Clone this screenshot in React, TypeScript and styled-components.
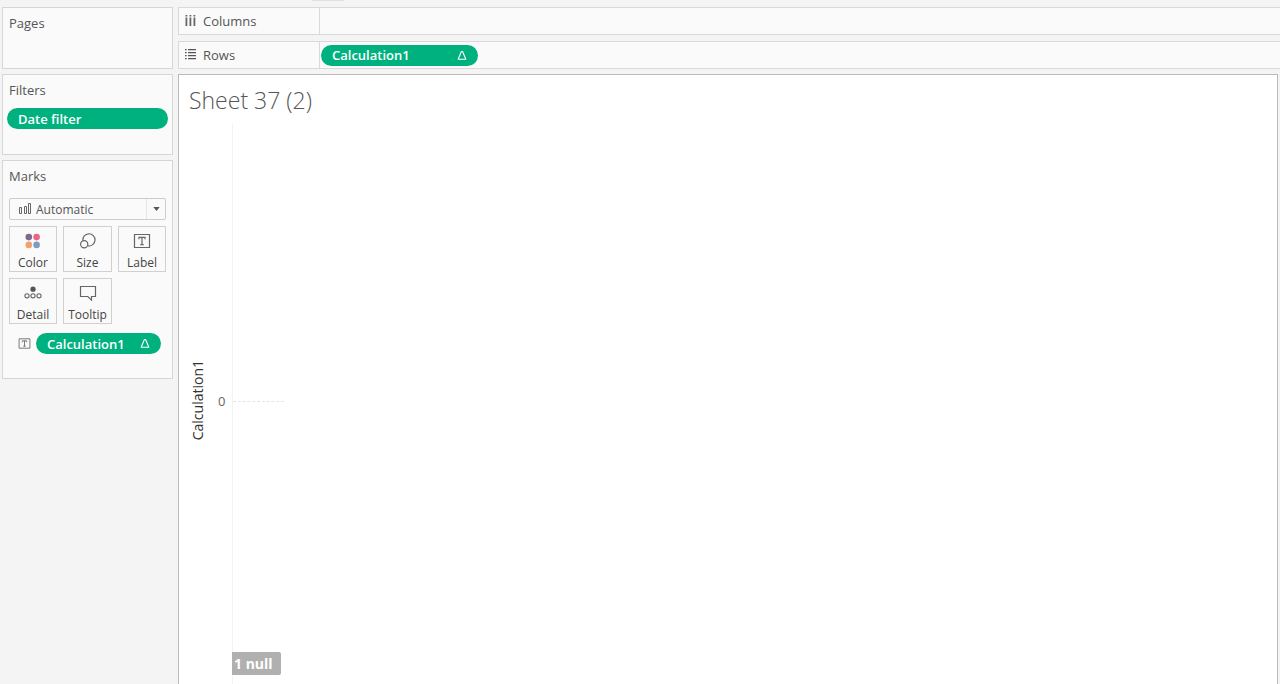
import React from "react";
import styled, { createGlobalStyle } from "styled-components";

const GlobalStyle = createGlobalStyle`
  *, *::before, *::after { box-sizing: border-box; }
  body {
    margin: 0;
    background: #f4f4f4;
    color: #555;
    font-family: "Open Sans", "Noto Sans", sans-serif;
    font-size: 13px;
  }
  button, select { font: inherit; color: inherit; margin: 0; }
`;

const Page = styled.div`
  display: flex;
  flex-direction: column;
  min-height: 100vh;
`;

const ToolbarEdge = styled.header`
  height: 7px;
  padding-left: 312px;
  &::before {
    content: "";
    display: block;
    width: 32px;
    height: 1px;
    background: #e0e0e0;
  }
`;

const Workspace = styled.div`
  flex: 1;
  display: flex;
  gap: 5px;
  padding-left: 2px;
`;

const Sidebar = styled.aside`
  flex: 0 0 171px;
  min-width: 0;
  display: flex;
  flex-direction: column;
  gap: 5px;
`;

const Card = styled.section<{ $minHeight: number }>`
  min-height: ${(p) => p.$minHeight}px;
  padding: 5px 6px 24px;
  background: #fafafa;
  border: 1px solid #d6d6d6;
`;

const CardTitle = styled.h2`
  margin: 0;
  font-size: 13px;
  font-weight: 400;
  line-height: 20px;
`;

const Pill = styled.button`
  display: flex;
  align-items: center;
  justify-content: space-between;
  height: 21px;
  padding: 0 11px;
  border: 0;
  border-radius: 11px;
  background: #00b180;
  color: #fff;
  font-weight: 600;
  text-align: left;
`;

const FilterPill = styled(Pill)`
  width: 161px;
  margin: 8px -2px 0;
`;

const RowPill = styled(Pill)`
  width: 157px;
`;

const MarkPill = styled(Pill)`
  width: 125px;
`;

const MarkType = styled.label`
  display: grid;
  grid-template-columns: 20px 1fr 19px;
  align-items: center;
  height: 22px;
  margin-top: 12px;
  padding-left: 6px;
  background: #fafafa;
  border: 1px solid #ccc;
  border-radius: 2px;
  font-size: 12px;
`;

const MarkSelect = styled.select`
  grid-column: 2 / 4;
  grid-row: 1;
  height: 20px;
  padding: 0;
  border: 0;
  background: transparent;
  appearance: none;
`;

const MarkIcon = styled.span`
  grid-column: 1;
  grid-row: 1;
  display: flex;
  padding-left: 3px;
`;

const Arrow = styled.span`
  grid-column: 3;
  grid-row: 1;
  display: flex;
  align-items: center;
  justify-content: center;
  height: 20px;
  border-left: 1px solid #e4e4e4;
  pointer-events: none;
`;

const MarkGrid = styled.div`
  display: grid;
  grid-template-columns: 48px 49px 48px;
  gap: 6px;
  margin-top: 6px;
`;

const MarkButton = styled.button`
  display: flex;
  flex-direction: column;
  align-items: center;
  height: 46px;
  padding: 5px 0 0;
  background: #fafafa;
  border: 1px solid #d0d0d0;
  font-size: 12px;
  line-height: 16px;
  color: #444;
  svg { margin-bottom: 5px; }
`;

const Encoding = styled.div`
  display: flex;
  align-items: center;
  gap: 5px;
  margin-top: 9px;
  padding-left: 9px;
`;

const Main = styled.main`
  flex: 1;
  min-width: 0;
  display: flex;
  flex-direction: column;
`;

const Shelf = styled.div`
  display: flex;
  height: 28px;
  margin-bottom: 6px;
  background: #fafafa;
  border: 1px solid #d9d9d9;
  border-right: 0;
  & + & { margin-bottom: 5px; }
`;

const ShelfLabel = styled.div`
  flex: 0 0 141px;
  display: flex;
  align-items: center;
  gap: 6px;
  padding-left: 6px;
  border-right: 1px solid #d9d9d9;
`;

const ShelfBody = styled.div`
  flex: 1;
  display: flex;
  align-items: center;
  padding-left: 1px;
`;

const View = styled.section`
  flex: 1;
  display: flex;
  flex-direction: column;
  margin-right: 2px;
  background: #fff;
  border: 1px solid #bbb;
  border-bottom: 0;
`;

const SheetTitle = styled.h1`
  margin: 0;
  padding: 9px 10px 8px;
  font-size: 23px;
  font-weight: 300;
  line-height: 32px;
  color: #555;
`;

const Chart = styled.div`
  flex: 1;
  display: flex;
`;

const AxisTitle = styled.div`
  display: flex;
  align-items: center;
  justify-content: center;
  width: 37px;
  padding-bottom: 7px;
  span {
    writing-mode: vertical-rl;
    transform: rotate(180deg);
    font-size: 14px;
    line-height: 18px;
    color: #333;
  }
`;

const AxisTick = styled.div`
  display: flex;
  align-items: center;
  width: 16px;
  padding: 0 0 7px 2px;
  color: #666;
`;

const Pane = styled.div`
  position: relative;
  flex: 1;
  display: flex;
  align-items: center;
  padding-bottom: 6px;
  border-left: 1px solid #f3f3f3;
`;

const ZeroLine = styled.div`
  width: 51px;
  border-top: 1px dashed #e4e4e4;
`;

const NullBadge = styled.button`
  position: absolute;
  left: -1px;
  bottom: 9px;
  height: 23px;
  width: 49px;
  padding: 0 0 0 2px;
  border: 0;
  border-radius: 0 2px 2px 0;
  background: #b0b0b0;
  color: #fff;
  font-size: 14px;
  font-weight: 700;
  text-align: left;
`;

const Delta = () => (
  <svg width="10" height="11" viewBox="0 0 10 11" fill="none" stroke="#fff" strokeLinejoin="round" aria-hidden="true">
    <path d="M4.4 1.5h1.2L8.8 9.3H1.2z" strokeWidth="1.1" />
  </svg>
);

const ColumnsIcon = () => (
  <svg width="12" height="12" viewBox="0 0 12 12" fill="#666" aria-hidden="true">
    {[0.5, 4.5, 8.5].map((x) => (
      <path key={x} d={`M${x} 0h1.8v1.6h-1.8zM${x} 2.6h1.8v8.4h-1.8z`} />
    ))}
  </svg>
);

const RowsIcon = () => (
  <svg width="12" height="12" viewBox="0 0 12 12" fill="#555" aria-hidden="true">
    {[1, 4, 7, 10].map((y) => (
      <path key={y} d={`M0 ${y - 1}h1.6v1.3h-1.6zM3 ${y - 1}h8v1.3h-8z`} />
    ))}
  </svg>
);

const BarsIcon = () => (
  <svg width="13" height="12" viewBox="0 0 13 12" fill="none" stroke="#666" aria-hidden="true">
    <path d="M.5 4.5h2v6h-2zM5.5 3.5h2v7h-2zM9.5 .5h2v10h-2z" />
  </svg>
);

const ColorIcon = () => (
  <svg width="18" height="18" viewBox="0 0 18 18" aria-hidden="true">
    <circle cx="4.8" cy="5.1" r="3.3" fill="#7a6a8e" />
    <circle cx="12.6" cy="5.1" r="3.3" fill="#ee6480" />
    <circle cx="4.8" cy="12.9" r="3.3" fill="#f3a06c" />
    <circle cx="12.6" cy="12.9" r="3.3" fill="#7c9dbd" />
  </svg>
);

const SizeIcon = () => (
  <svg width="18" height="18" viewBox="0 0 18 18" fill="none" stroke="#666" strokeWidth="1.2" aria-hidden="true">
    <path d="M3.9 8.7A6.1 6.1 0 1 1 9 13.9" />
    <circle cx="5.2" cy="12.3" r="3.6" />
  </svg>
);

const TextIcon = ({ size }: { size: number }) => (
  <svg width={size} height={size} viewBox="0 0 18 18" fill="none" stroke="#666" strokeWidth="1.2" aria-hidden="true">
    <path d="M1.5 2.5h15v13h-15z" />
    <path d="M6 7.3V5.3h6v2M9 5.3v7.4M7.3 12.7h3.4" />
  </svg>
);

const DetailIcon = () => (
  <svg width="18" height="18" viewBox="0 0 18 18" fill="none" stroke="#666" strokeWidth="1.1" aria-hidden="true">
    <circle cx="9" cy="5.2" r="2.6" fill="#555" stroke="none" />
    <circle cx="3" cy="11.8" r="2.1" />
    <circle cx="9" cy="11.8" r="2.1" />
    <circle cx="15" cy="11.8" r="2.1" />
  </svg>
);

const TooltipIcon = () => (
  <svg width="18" height="18" viewBox="0 0 18 18" fill="none" stroke="#666" strokeWidth="1.2" aria-hidden="true">
    <path d="M1.5 2.5h15v10h-4v3.6L8.8 12.5H1.5z" />
  </svg>
);

const marks = [
  { name: "Color", icon: <ColorIcon /> },
  { name: "Size", icon: <SizeIcon /> },
  { name: "Label", icon: <TextIcon size={18} /> },
  { name: "Detail", icon: <DetailIcon /> },
  { name: "Tooltip", icon: <TooltipIcon /> },
];

export default function App() {
  return (
    <Page>
      <GlobalStyle />
      <ToolbarEdge />
      <Workspace>
        <Sidebar>
          <Card $minHeight={62}>
            <CardTitle>Pages</CardTitle>
          </Card>
          <Card $minHeight={81}>
            <CardTitle>Filters</CardTitle>
            <FilterPill type="button">Date filter</FilterPill>
          </Card>
          <Card $minHeight={218}>
            <CardTitle>Marks</CardTitle>
            <MarkType>
              <MarkIcon>
                <BarsIcon />
              </MarkIcon>
              <MarkSelect aria-label="Mark type" defaultValue="Automatic">
                <option>Automatic</option>
              </MarkSelect>
              <Arrow>
                <svg width="7" height="4" viewBox="0 0 7 4" fill="#555" aria-hidden="true">
                  <path d="M.3 0h6.4L3.5 4z" />
                </svg>
              </Arrow>
            </MarkType>
            <MarkGrid>
              {marks.map((m) => (
                <MarkButton key={m.name} type="button">
                  {m.icon}
                  {m.name}
                </MarkButton>
              ))}
            </MarkGrid>
            <Encoding>
              <TextIcon size={13} />
              <MarkPill type="button">
                Calculation1
                <Delta />
              </MarkPill>
            </Encoding>
          </Card>
        </Sidebar>
        <Main>
          <Shelf>
            <ShelfLabel>
              <ColumnsIcon />
              Columns
            </ShelfLabel>
            <ShelfBody />
          </Shelf>
          <Shelf>
            <ShelfLabel>
              <RowsIcon />
              Rows
            </ShelfLabel>
            <ShelfBody>
              <RowPill type="button">
                Calculation1
                <Delta />
              </RowPill>
            </ShelfBody>
          </Shelf>
          <View>
            <SheetTitle>Sheet 37 (2)</SheetTitle>
            <Chart>
              <AxisTitle>
                <span>Calculation1</span>
              </AxisTitle>
              <AxisTick>0</AxisTick>
              <Pane>
                <ZeroLine />
                <NullBadge type="button">1 null</NullBadge>
              </Pane>
            </Chart>
          </View>
        </Main>
      </Workspace>
    </Page>
  );
}
